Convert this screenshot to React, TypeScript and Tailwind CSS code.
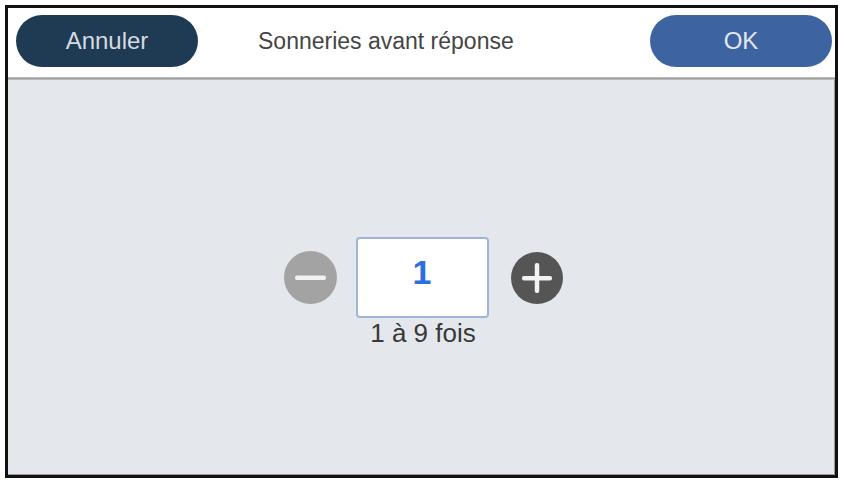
import React from "react";

const font = { fontFamily: '"Liberation Sans", Arial, sans-serif' };

export default function App() {
  return (
    <div className="w-[843px] h-[481px] bg-white pt-[5px] pl-[5px]" style={font}>
      <div className="w-[833px] h-[473px] border-[3px] border-[#111] flex flex-col bg-white">
        <div className="h-[69px] flex items-start pt-[7px] pl-[8px] pr-[3px] bg-white">
          <div className="w-[182px] h-[52px] rounded-full bg-[#1f3a53] flex items-center justify-center text-[#d5dbe2] text-[24px]">
            Annuler
          </div>
          <div className="flex-1 h-[52px] flex items-center pl-[60px] text-[#454545] text-[23px]">
            Sonneries avant réponse
          </div>
          <div className="w-[182px] h-[52px] rounded-full bg-[#3d63a0] flex items-center justify-center text-[#e2e8f1] text-[24px]">
            OK
          </div>
        </div>
        <div className="h-[3px] bg-gradient-to-b from-[#c9c9c9] via-[#a0a0a0] to-[#c4c8cc]" />
        <div className="flex-1 bg-[#e4e8ec] border-r border-b border-[#9a9a9a] flex flex-col items-center pt-[157px]">
          <div className="flex items-center ml-[4px]">
            <svg width="53" height="53" viewBox="0 0 53 53">
              <circle cx="26.5" cy="26.5" r="26.5" fill="#a3a3a3" />
              <rect x="11" y="24.5" width="31" height="4.5" rx="2" fill="#f2f2f2" />
            </svg>
            <div className="ml-[19px] w-[133px] h-[81px] pb-[10px] bg-white border-2 border-[#9fb4d6] rounded-[4px] flex items-center justify-center text-[#2b6fe0] text-[34px] font-bold">
              1
            </div>
            <svg className="ml-[22px]" width="52" height="52" viewBox="0 0 52 52">
              <circle cx="26" cy="26" r="26" fill="#555555" />
              <rect x="11" y="24" width="30" height="4.5" rx="2" fill="#f2f2f2" />
              <rect x="23.75" y="11" width="4.5" height="30" rx="2" fill="#f2f2f2" />
            </svg>
          </div>
          <div className="ml-[4px] text-[26px] leading-[30px] text-[#383838]">
            1 à 9 fois
          </div>
        </div>
      </div>
    </div>
  );
}
